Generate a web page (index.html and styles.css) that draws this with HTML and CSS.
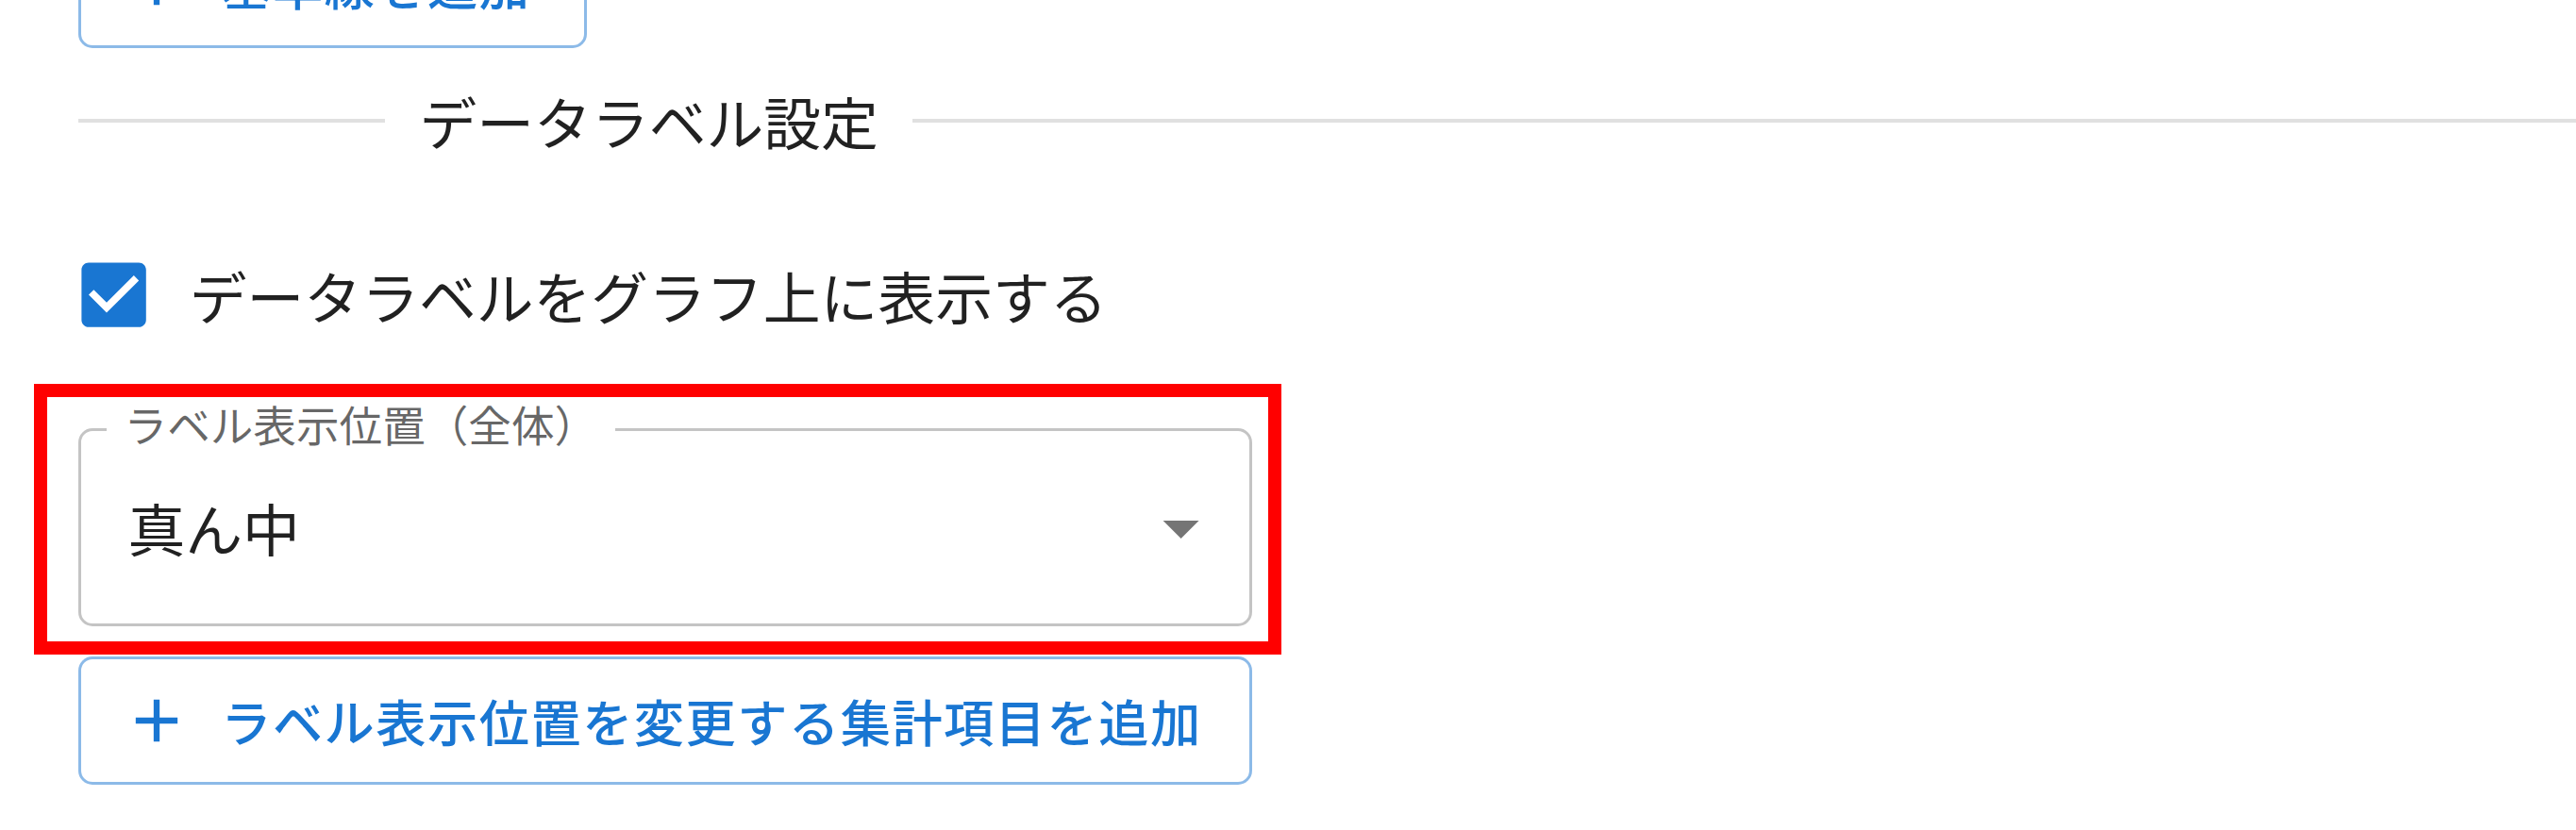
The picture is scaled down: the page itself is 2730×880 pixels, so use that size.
FILE: index.html
```html
<!DOCTYPE html>
<html lang="ja">
<head>
<meta charset="utf-8">
<title>データラベル設定</title>
<link rel="stylesheet" href="styles.css">
</head>
<body>
<div class="page">
  <button class="btn btn-auto" type="button">
    <svg class="btn-icon" viewBox="0 0 24 24"><path d="M19 13h-6v6h-2v-6H5v-2h6V5h2v6h6v2z"/></svg>
    <span class="btn-text">基準線を追加</span>
  </button>

  <div class="divider">
    <span class="divider-line divider-line-left"></span>
    <span class="divider-text">データラベル設定</span>
    <span class="divider-line divider-line-right"></span>
  </div>

  <label class="check-row">
    <span class="check-btn">
      <svg class="check-icon" viewBox="0 0 24 24"><path d="M19 3H5c-1.11 0-2 .9-2 2v14c0 1.1.89 2 2 2h14c1.11 0 2-.9 2-2V5c0-1.1-.89-2-2-2zm-9 14l-5-5 1.41-1.41L10 14.17l7.59-7.59L19 8l-9 9z"/></svg>
    </span>
    <span class="check-label">データラベルをグラフ上に表示する</span>
  </label>

  <div class="select-wrap">
    <div class="select">
      <span class="select-label">ラベル表示位置（全体）</span>
      <span class="select-value">真ん中</span>
      <svg class="select-arrow" viewBox="0 0 24 24"><path d="M7 10l5 5 5-5z"/></svg>
    </div>
  </div>

  <button class="btn btn-full" type="button">
    <svg class="btn-icon" viewBox="0 0 24 24"><path d="M19 13h-6v6h-2v-6H5v-2h6V5h2v6h6v2z"/></svg>
    <span class="btn-text">ラベル表示位置を変更する集計項目を追加</span>
  </button>
</div>
</body>
</html>
```

FILE: styles.css
```css
html, body {
  margin: 0;
  padding: 0;
  background: #ffffff;
}

body {
  font-family: "Noto Sans CJK JP", "Noto Sans", sans-serif;
  color: rgba(0, 0, 0, 0.87);
  overflow: hidden;
  width: 2730px;
  height: 880px;
}

.page {
  display: flex;
  flex-direction: column;
  align-items: flex-start;
  padding-left: 83px;
  margin-top: -85px;
}

/* Outlined buttons */
.btn {
  display: flex;
  align-items: center;
  box-sizing: border-box;
  height: 136px;
  margin: 0;
  padding: 0 57px;
  border: 3.8px solid rgba(25, 118, 210, 0.5);
  border-radius: 15px;
  background: #ffffff;
  color: #1976d2;
  font-family: "Noto Sans CJK JP", "Noto Sans", sans-serif;
  font-size: 53.2px;
  font-weight: 500;
  letter-spacing: 1.52px;
  line-height: 1.75;
  cursor: pointer;
}

.btn-full {
  width: 1244px;
  margin-top: 31.5px;
}

.btn-icon {
  width: 76px;
  height: 76px;
  margin-left: -15.2px;
  margin-right: 30.4px;
  fill: currentColor;
  flex: none;
}

.btn-text {
  white-space: nowrap;
}

/* Divider with title */
.divider {
  display: flex;
  align-items: center;
  align-self: stretch;
  margin-top: 31.4px;
  height: 91.2px;
}

.divider-line {
  height: 3.8px;
  background: rgba(0, 0, 0, 0.12);
}

.divider-line-left {
  width: 325px;
  flex: none;
}

.divider-line-right {
  flex: 1;
}

.divider-text {
  padding: 0 36.5px;
  font-size: 60.8px;
  line-height: 1.5;
  white-space: nowrap;
}

/* Checkbox */
.check-row {
  display: flex;
  align-items: center;
  margin-top: 59.6px;
  margin-left: -41.8px;
  cursor: pointer;
}

.check-btn {
  display: flex;
  padding: 34.2px;
}

.check-icon {
  width: 91.2px;
  height: 91.2px;
  fill: #1976d2;
}

.check-label {
  font-size: 60.8px;
  line-height: 1.5;
  white-space: nowrap;
}

/* Select */
.select-wrap {
  position: relative;
  margin-top: 61.2px;
}

.select-wrap::after {
  content: "";
  position: absolute;
  top: -47px;
  left: -47px;
  right: -31px;
  bottom: -30px;
  border: 14px solid #ff0000;
  pointer-events: none;
}

.select {
  position: relative;
  display: flex;
  align-items: center;
  box-sizing: border-box;
  width: 1244px;
  height: 210.5px;
  padding: 0 26.6px 0 49.4px;
  border: 3.8px solid rgba(0, 0, 0, 0.23);
  border-radius: 15px;
}

.select-label {
  position: absolute;
  top: -30px;
  left: 26.6px;
  padding: 0 19px;
  background: #ffffff;
  font-size: 45.6px;
  line-height: 1;
  color: rgba(0, 0, 0, 0.6);
  white-space: nowrap;
}

.select-value {
  flex: 1;
  font-size: 60.8px;
  line-height: 1.4375;
  white-space: nowrap;
}

.select-arrow {
  width: 91.2px;
  height: 91.2px;
  fill: rgba(0, 0, 0, 0.54);
  flex: none;
}
```
